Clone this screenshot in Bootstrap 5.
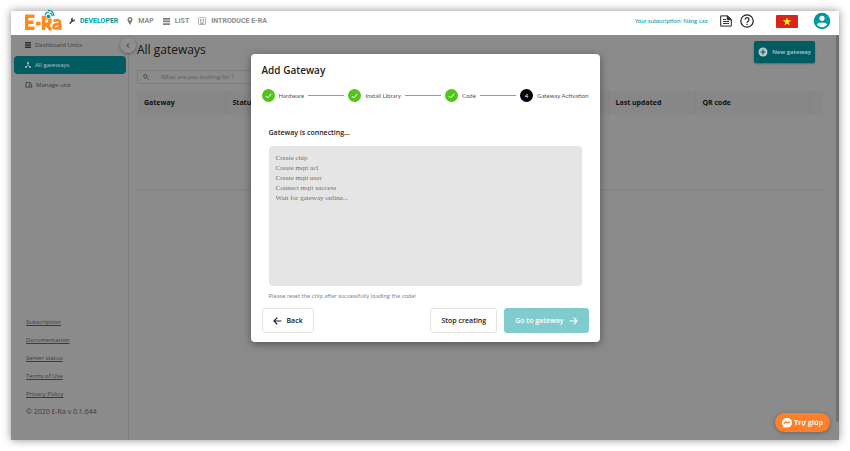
<!DOCTYPE html>
<html lang="en">
<head>
<meta charset="utf-8">
<meta name="viewport" content="width=device-width, initial-scale=1">
<title>E-Ra – All gateways</title>
<link href="https://cdn.jsdelivr.net/npm/bootstrap@5.3.0/dist/css/bootstrap.min.css" rel="stylesheet">
<style>
:root{--teal:#00979d;--dim:#8b8b8b;--deep:#005c60}
body{font-family:"Open Sans","Noto Sans",sans-serif;font-size:7px;line-height:12px;color:#222;background:#fff;min-height:100vh;padding:11px}
a{color:inherit}
svg{display:block;flex:none;overflow:visible}
.frame{min-height:calc(100vh - 22px);box-shadow:0 0 8px rgba(0,0,0,.45);background:var(--dim)}
.topbar{height:24px;background:#fff;padding:0 9px 4px 14px}
.main-menu{font-family:Roboto,sans-serif;font-size:7px;font-weight:700;color:#8c8c8c;gap:9px}
.main-menu a{text-decoration:none;gap:5px}
.main-menu a.on{color:var(--teal)}
.plan{font-family:Lato,"Open Sans",sans-serif;font-size:6px;color:var(--teal);margin-right:12px}
.icon-btn{border:0;background:none;padding:0}
.tools{margin-right:22px}
.side{width:118px;border-right:1px solid #808080;padding:1px 2px 22px 3px;color:#3c3c3c}
.side-item{height:18px;margin-bottom:2px;padding:0 11px;gap:4px;border-radius:4px;text-decoration:none;font-size:6px}
.side-item.on{background:var(--deep);color:#b5c4c4}
.side-foot{padding-left:12px;gap:6px}
.side-foot a{font-size:6px}
.fold{right:-8px;top:2px;width:16px;height:16px;border:0;border-radius:50%;background:#8f8f8f;color:#222;padding:0;box-shadow:0 1px 3px rgba(0,0,0,.35);z-index:1}
.content-pane{padding:6px 13px 0 8px}
h1{font-size:12px;line-height:18px;font-weight:400;margin:0;color:#141414}
.new-btn{height:22px;margin-right:8px;padding:0 4px;border:0;border-radius:2px;background:var(--deep);color:#b9c6c6;font-size:6px;font-weight:600;gap:4px;box-shadow:0 1px 2px rgba(0,0,0,.3)}
.search-box{height:14px;border:1px solid #7d7d7d;border-radius:2px;width:200px;padding:0 5px;gap:12px;margin:7px 0;color:#3c3c3c}
.search-box input{border:0;background:none;font-size:6px;line-height:12px;padding:0;outline:0;width:150px}
.search-box input::placeholder{color:#5d5d5d;opacity:1}
.grid-table{table-layout:fixed;color:#101010}
.grid-table th{height:24px;background:#878787;font-weight:700;padding:0 7px;border-right:1px solid #828282}
.grid-table th:last-child{border:0;padding:0}
.grid-table td{height:74px;border-bottom:1px solid #818181}
.c-name{width:88px}.c-last{width:87px}.c-qr{width:114px}.c-end{width:14px}
.thumb{width:3px;height:387px;background:#6d7072;border-radius:0 0 2px 2px}
.dialog-wrap{top:54px}
.dialog-box{width:349px;background:#fff;border-radius:4px;padding:8px 11px 9px;box-shadow:0 2px 8px rgba(0,0,0,.4)}
h2{font-size:10px;line-height:17px;font-weight:600;margin:0;color:#222}
.steps{gap:4px;margin:10px 0 0;padding:0;list-style:none;color:#555;font-family:Lato,"Open Sans",sans-serif;font-size:6px;line-height:13px}
.dot{width:13px;height:13px;border-radius:50%;background:#52c41a;color:#fff}
.dot.now{background:#000}
.bar{height:1px;background:#5fc92e}
.work{padding:25px 7px 0}
h3{font-size:7px;line-height:12px;font-weight:600;margin:0 0 7px;color:#222}
.log{height:140px;background:#e5e5e5;border-radius:4px;padding:7px;font-family:"Liberation Serif",serif;line-height:10px;color:#707070}
.hint{font-family:Lato,"Open Sans",sans-serif;font-size:6px;color:#8a8a8a;margin:4px 0 6px}
.act{height:25px;border:1px solid #e3e3e3;border-radius:3px;background:#fff;padding:0 10px;font-weight:600;color:#222;gap:5px}
.act.go{background:#80cbce;border-color:#80cbce;color:#fff}
.act-gap{margin-right:7px}
.chat{right:20px;bottom:19px;height:19px;border:0;border-radius:10px;background:#ff7f2a;color:#fff;font-size:7px;font-weight:700;padding:0 7px;gap:2px;box-shadow:0 1px 4px rgba(0,0,0,.3)}
</style>
<script src="https://cdn.jsdelivr.net/npm/bootstrap@5.3.0/dist/js/bootstrap.bundle.min.js"></script>
</head>
<body>
<div class="frame d-flex flex-column">
  <header class="topbar d-flex align-items-center">
    <a href="#" aria-label="E-Ra home" class="me-2">
      <svg width="36" height="20" viewBox="0 0 36 20" fill="none" stroke="#ff8a1c" stroke-width="3.400">
        <path d="M9.500 5.200H1.700V17.300H9.500M1.700 11.300H8.500M11 12.500h4.500"/>
        <path d="M18.500 19V6.500h2.500q4 0 4 3.500t-4 3.500h-2.500M21.500 13.500L26 19"/>
        <path d="M28.500 10q6.500-2.500 6.500 2V19M34.500 13.300q-6-.5-6 2.200 0 3.500 6 .7" stroke-width="2.800"/>
        <circle cx="23.500" cy="5.500" r="2.200" fill="#00979d" stroke="#fff" stroke-width=".8"/>
        <path d="M20 4q1-3 4-3M23 -.5q5-.5 6 5.500M24.500 2q2.500 0 2.800 3" stroke="#00979d" stroke-width="1.200"/>
      </svg>
    </a>
    <nav class="main-menu d-flex align-items-center" aria-label="Main">
      <a href="#" class="on d-flex align-items-center"><svg width="6" height="8" viewBox="0 0 6 8"><path d="M.7 6.800 3.500 3.500" stroke="#444" stroke-width="1.500"/><path d="M5.800 2.300A2 2 0 1 1 4 .8L3.500 2.200l1 .8z" fill="#444"/></svg>DEVELOPER</a>
      <a href="#" class="d-flex align-items-center"><svg width="6" height="8" viewBox="0 0 6 8"><path d="M3 0a2.500 2.500 0 0 0-2.500 2.500C.5 4.500 3 8 3 8s2.500-3.500 2.500-5.500A2.500 2.500 0 0 0 3 0zm0 1.500a1 1 0 1 1 0 2 1 1 0 0 1 0-2z" fill="#808080" fill-rule="evenodd"/></svg>MAP</a>
      <a href="#" class="d-flex align-items-center"><svg width="7" height="7" viewBox="0 0 7 7" fill="#808080"><path d="M0 0h7v1.700H0zM0 2.600h7v1.700H0zM0 5.200h7v1.700H0z"/></svg>LIST</a>
      <a href="#" class="d-flex align-items-center"><svg width="8" height="8" viewBox="0 0 8 8" fill="none" stroke="#9a9a9a" stroke-width=".8"><rect x=".5" y=".5" width="7" height="7" rx="1"/><path d="M2.500 2v2.500a1.500 1.500 0 0 0 3 0V2M2 6.300h4M4 2v2"/></svg>INTRODUCE E-RA</a>
    </nav>
    <span class="plan ms-auto">Your subscription: Nâng cao</span>
    <div class="tools d-flex align-items-center gap-2">
      <button class="icon-btn" type="button" aria-label="Documents"><svg width="12" height="12" viewBox="0 0 12 12" fill="none" stroke="#222"><path d="M.7.900h7l3.600 3.500v6.700H.7z"/><path d="M7.300.900v3.800h4" fill="#222"/><path d="M3 4.500h3M3 6.500h6M3 8.500h6" stroke-width=".9"/></svg></button>
      <button class="icon-btn" type="button" aria-label="Help"><svg width="14" height="14" viewBox="0 0 14 14" fill="none" stroke="#222" stroke-width="1.200"><circle cx="7" cy="7" r="6.200"/><path d="M5 5.600a2 2 0 1 1 3.200 1.600Q7 8 7 8.800M7 9.700v1.200"/></svg></button>
    </div>
    <button class="icon-btn" type="button" aria-label="Language: Vietnamese"><svg width="22" height="13" viewBox="0 0 22 13"><rect width="22" height="13" rx="1" fill="#da251d"/><path d="M11 2.300 12 5.300h3.300L12.600 7.200l1 3.100L11 8.400l-2.600 1.900 1-3.100L6.700 5.300H10z" fill="#ff0"/></svg></button>
    <button class="icon-btn ms-3" type="button" aria-label="Account"><svg width="16" height="16" viewBox="0 0 16 16"><circle cx="8" cy="8" r="8.300" fill="#00979d"/><circle cx="8" cy="5.300" r="2.600" fill="#fff"/><path d="M3 11.800C3 8.800 13 8.800 13 11.800 10.500 15 5.500 15 3 11.800z" fill="#fff"/></svg></button>
  </header>

  <div class="d-flex flex-grow-1">
    <aside class="side position-relative d-flex flex-column flex-shrink-0">
      <nav aria-label="Sections">
        <a href="#" class="side-item d-flex align-items-center"><svg width="6" height="6" viewBox="0 0 6 6" fill="#303030"><path d="M0 0h6v1.600H0zM0 2.200h6v1.600H0zM0 4.400h6V6H0z"/></svg>Dashboard Units</a>
        <a href="#" class="side-item on d-flex align-items-center"><svg width="6" height="6" viewBox="0 0 6 6" fill="#b5c4c4" stroke="#b5c4c4"><circle cx="3" cy="1" r=".6"/><circle cx="1" cy="5" r=".6"/><circle cx="5" cy="5" r=".6"/><path d="M3 1v2.200L1 5M3 3.200 5 5" fill="none" stroke-width=".7"/></svg>All gateways</a>
        <a href="#" class="side-item d-flex align-items-center"><svg width="7" height="6" viewBox="0 0 7 6" fill="none" stroke="#303030" stroke-width=".7"><path d="M6 .5H1v4M0 5h4M4.400 2h2.200v3.200H4.400z"/></svg>Manage unit</a>
      </nav>
      <button class="fold position-absolute d-flex align-items-center justify-content-center" type="button" aria-label="Collapse sidebar"><svg width="4" height="5" viewBox="0 0 4 5" fill="none" stroke="currentColor"><path d="M3 .5l-2 2 2 2"/></svg></button>
      <div class="side-foot d-flex flex-column align-items-start mt-auto">
        <a href="#">Subscription</a><a href="#">Documentation</a><a href="#">Server status</a><a href="#">Terms of Use</a><a href="#">Privacy Policy</a>
        <span>© 2020 E-Ra v 0.1.644</span>
      </div>
    </aside>

    <main class="content-pane flex-grow-1">
      <div class="d-flex justify-content-between align-items-start">
        <h1>All gateways</h1>
        <button class="new-btn d-flex align-items-center" type="button"><svg width="10" height="10" viewBox="0 0 10 10"><circle cx="5" cy="5" r="4.500" fill="#b9c6c6"/><path d="M5 2.500v5M2.500 5h5" stroke="#005c60" stroke-width="1.200"/></svg>New gateway</button>
      </div>
      <label class="search-box d-flex align-items-center"><svg width="6" height="6" viewBox="0 0 6 6" fill="none" stroke="currentColor" stroke-width=".8"><circle cx="2.300" cy="2.300" r="1.700"/><path d="m3.500 3.500 2.200 2.200"/></svg><input type="search" placeholder="What are you looking for ?" aria-label="Search gateways"></label>
      <table class="grid-table w-100">
        <thead><tr><th scope="col" class="c-name">Gateway</th><th scope="col">Status</th><th scope="col" class="c-last">Last updated</th><th scope="col" class="c-qr">QR code</th><th class="c-end"></th></tr></thead>
        <tbody><tr><td colspan="5"></td></tr></tbody>
      </table>
    </main>
    <div class="thumb flex-shrink-0"></div>
  </div>
</div>

<div class="dialog-wrap position-absolute start-0 end-0 d-flex justify-content-center">
  <section class="dialog-box" role="dialog" aria-labelledby="dlg-title">
    <h2 id="dlg-title">Add Gateway</h2>
    <ol class="steps d-flex align-items-center">
      <li class="dot d-flex align-items-center justify-content-center"><svg width="7" height="6" viewBox="0 0 7 6" fill="none" stroke="#fff"><path d="m.8 3 1.900 2L6.200.900"/></svg></li><li>Hardware</li><li class="bar flex-fill"></li>
      <li class="dot d-flex align-items-center justify-content-center"><svg width="7" height="6" viewBox="0 0 7 6" fill="none" stroke="#fff"><path d="m.8 3 1.900 2L6.200.900"/></svg></li><li>Install Library</li><li class="bar flex-fill"></li>
      <li class="dot d-flex align-items-center justify-content-center"><svg width="7" height="6" viewBox="0 0 7 6" fill="none" stroke="#fff"><path d="m.8 3 1.900 2L6.200.900"/></svg></li><li>Code</li><li class="bar flex-fill"></li>
      <li class="dot now d-flex align-items-center justify-content-center">4</li><li>Gateway Activation</li>
    </ol>
    <div class="work">
      <h3>Gateway is connecting...</h3>
      <div class="log">
        <div>Create chip</div><div>Create mqtt acl</div><div>Create mqtt user</div><div>Connect mqtt success</div><div>Wait for gateway online...</div>
      </div>
      <p class="hint">Please reset the chip after successfully loading the code!</p>
    </div>
    <div class="d-flex">
      <button type="button" class="act d-flex align-items-center me-auto"><svg width="9" height="8" viewBox="0 0 9 8" fill="none" stroke="currentColor" stroke-width="1.200"><path d="M8.500 4H1M4.300.700 1 4l3.300 3.300"/></svg>Back</button>
      <button type="button" class="act act-gap d-flex align-items-center">Stop creating</button>
      <button type="button" class="act go d-flex align-items-center">Go to gateway<svg width="9" height="8" viewBox="0 0 9 8" fill="none" stroke="currentColor" stroke-width="1.200"><path d="M.5 4H8M4.700.700 8 4 4.700 7.300"/></svg></button>
    </div>
  </section>
</div>
<button type="button" class="chat position-fixed d-flex align-items-center"><svg width="10" height="10" viewBox="0 0 10 10"><path d="M5 0C2 0 0 2.100 0 4.800c0 1.500.6 2.700 1.600 3.500V10l1.600-.8C8 10.300 10 7.500 10 4.800 10 2.100 8 0 5 0z" fill="#fff"/><path d="m1.800 6 2.300-2.400 1.700 1.300 2.400-1.300" fill="none" stroke="#ff7f2a" stroke-width="1.200"/></svg>Trợ giúp</button>
</body>
</html>
